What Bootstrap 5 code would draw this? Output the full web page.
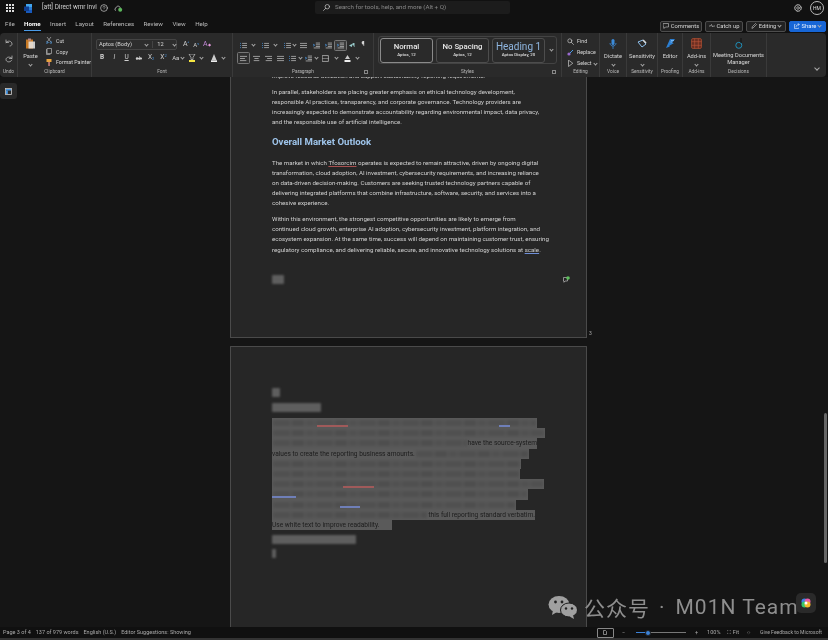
<!doctype html>
<html lang="en"><head><meta charset="utf-8"><title>Word</title>
<link href="https://cdn.jsdelivr.net/npm/bootstrap@5.3.0/dist/css/bootstrap.min.css" rel="stylesheet">
<script src="https://cdn.jsdelivr.net/npm/bootstrap@5.3.0/dist/js/bootstrap.bundle.min.js"></script>
<style>
html,body{height:100%;overflow:hidden;background:#111}
.shell{width:828px;height:640px;background:#111;color:#d6d6d6;font-family:Roboto,"Liberation Sans",sans-serif;font-size:6px;line-height:1.2;filter:blur(.5px);overflow:hidden;position:relative}
svg{display:block}
.i{fill:none;stroke:#c9c9c9;stroke-width:1;stroke-linecap:round;stroke-linejoin:round}
.titlebar{height:16px;padding-left:2px}
.doctitle{font-size:6.4px;color:#d0d0d0;margin-left:10px;width:54px;white-space:nowrap}
.searchbox{position:absolute;left:315px;top:1px;width:195px;height:13px;background:#1c1c1c;border-radius:2px;color:#8a8a8a;padding-left:8px;font-size:6.2px;gap:5px}
.avatar{width:14px;height:14px;border:1px solid #bbb;border-radius:50%;font-size:5px;color:#ddd}
.tabrow{height:17px;padding:3px 2px 0 0}
.tabname{font-size:6.2px;color:#bdbdbd;padding-bottom:2px;border-bottom:1px solid transparent;white-space:nowrap}
.tabsel{color:#fff;font-weight:700;border-bottom-color:#4a9be8}
.cmd{height:11px;border:1px solid #4d4d4d;border-radius:2px;background:#222;color:#d6d6d6;font-size:5.8px;padding:0;gap:2px;justify-content:center;white-space:nowrap}
.cmd-share{background:#1766d6;border-color:#1766d6;color:#eaf2ff}
.ribbon{height:44px;width:826px;background:#2a2a2a;border-radius:4px;position:relative;z-index:2}
.grp{height:44px;border-right:1px solid #3a3a3a;flex:none;position:relative;padding-bottom:9px}
.grp-label{position:absolute;left:0;right:0;bottom:2px;text-align:center;font-size:4.8px;color:#bbb;white-space:nowrap}
.launch{position:absolute;right:5px;bottom:3px;width:4px;height:4px;border:.6px solid #888}
.rw{height:11px;white-space:nowrap}
.cell-s{width:8px;flex:none;text-align:center;margin-left:4.3px}
.chev{width:3px;height:3px;border-right:.8px solid #aaa;border-bottom:.8px solid #aaa;transform:rotate(45deg);margin:-1px auto 0;flex:none}
.boxed{border:1px solid #777;border-radius:1.5px;background:#3b3b3b}
.fontbox{border:1px solid #444;border-radius:2px;height:11px;width:81px;background:#2d2d2d}
.lbl{font-size:5.7px;color:#d8d8d8;white-space:nowrap}
.lbl-sm{font-size:5.3px}
.pi{width:7px;height:7px;flex:none}
.stylewrap{border:1px solid #434343;border-radius:3px;height:28px;width:179px;padding:1px;gap:3px;margin:3px 0 0 4px}
.stylecard{width:53px;height:25px;border:1px solid #4d4d4d;border-radius:3px;text-align:center;flex:none}
.stylecard.on{border-color:#8a8a8a}
.sname{font-size:7.8px;line-height:11px;font-weight:500;color:#e8e8e8;padding-top:2px;height:13px}
.sh1{font-size:10px;font-weight:400;color:#8fb6e0}
.ssub{font-size:4.4px;line-height:6px;font-weight:500;color:#ddd}
.canvas{height:550px;overflow:hidden;background:#151515;position:relative}
.leftcol{width:230px;flex:none;padding-top:6px}
.panebtn{width:17px;height:16px;background:#292929;border-radius:3px}
.pagecol{width:357px;flex:none}
.docpage{background:#262626;border:1px solid #4a4a4a;padding-left:41px;color:#d0d0d0;font-size:6.15px;line-height:10.2px;white-space:nowrap}
.pg1{height:267px;margin-top:-6px;border-top:0}
.pg2{height:290px;margin-top:8px;padding-top:41px;border-radius:1px 1px 0 0;border-bottom:0}
.docpage p{margin:0 0 5.4px}
.dochead{font-size:9.6px;line-height:14px;font-weight:700;color:#9ec4ea;margin:7.5px 0 8.6px}
.sq{text-decoration:underline solid #a85050 .6px;text-underline-offset:1px}
.sqb{text-decoration:underline #6f8fd8 .8px;text-underline-offset:1px}
.fuzz{background:#5e5e5e;filter:blur(1.3px);border-radius:1px}
.hlrow{height:10.2px;background:#5a5a5a;position:relative;color:#1c1c1c;font-size:6.6px;font-weight:400;line-height:10.2px;overflow:hidden}
.fuzzfill{background:repeating-linear-gradient(90deg,#505050 0 17px,#565656 17px 19px,#4e4e4e 19px 31px,#575757 31px 33px,#515151 33px 41px,#565656 41px 43px);filter:blur(1.4px);height:6px;flex:1 1 auto;margin:0 1px}
.uline{position:absolute;bottom:1.5px;height:2px;filter:blur(.6px)}
.pgnum{font-size:5px;color:#aaa;padding:0 0 2px 2px}
.scrolltrack{position:absolute;right:1px;top:336px;width:3px;height:150px;background:#666;border-radius:2px}
.statusbar{height:11px;background:#101010;padding:0 6px 0 3px;font-size:5.5px;color:#aaa;gap:5px;white-space:nowrap}
.botstrip{height:2px;background:#333}
.track{width:50px;height:1px;background:#777;position:relative}
.trackfill{width:12px;height:1px;background:#3b82d8}
.knob{position:absolute;left:9px;top:-2.500px;width:6px;height:6px;border-radius:50%;background:#3b82d8;border:1px solid #222}
.wmark{position:absolute;left:548px;top:594px;color:#8e8e8e;font-size:21px;line-height:26px;font-family:Roboto,"Noto Sans CJK SC",sans-serif;white-space:nowrap;z-index:5;letter-spacing:1px}
.wcjk{margin-left:6px;font-size:21px;letter-spacing:1px;font-family:"Noto Sans CJK SC",sans-serif}
.wdot{margin:0 10px 0 9px}
.copi{position:absolute;left:796px;top:593px;width:20px;height:20px;background:#2a2a2a;border-radius:5px;z-index:6}
</style></head><body>
<div class="shell d-flex flex-column">
<svg width="0" height="0" class="position-absolute"><defs>
<symbol id="list" viewBox="0 0 10 10"><path d="M3 2h7M3 5h7M3 8h7" stroke="#c9c9c9" fill="none"/><path d="M0 2h1.500M0 5h1.500M0 8h1.500" stroke="#4a9be8" fill="none"/></symbol>
<symbol id="indent" viewBox="0 0 10 10"><path d="M4 1.500h6M4 4h6M4 6.500h6M1 8.500h9" stroke="#c9c9c9" fill="none"/><path d="M0 3l2.500 1.500L0 6" stroke="#4a9be8" fill="none"/></symbol>
<symbol id="left" viewBox="0 0 10 10"><path d="M0 2h10M0 5h7M0 8h9" stroke="#c9c9c9" fill="none"/></symbol>
<symbol id="center" viewBox="0 0 10 10"><path d="M0 2h10M2 5h6M1 8h8" stroke="#c9c9c9" fill="none"/></symbol>
<symbol id="right" viewBox="0 0 10 10"><path d="M0 2h10M3 5h7M1 8h9" stroke="#c9c9c9" fill="none"/></symbol>
<symbol id="just" viewBox="0 0 10 10"><path d="M0 2h10M0 5h10M0 8h10" stroke="#c9c9c9" fill="none"/></symbol>
</defs></svg>

<div class="titlebar d-flex align-items-center flex-none">
  <svg width="8" height="8" viewBox="0 0 8 8" class="ms-1"><g fill="#ddd"><rect width="2" height="2"/><rect x="3" width="2" height="2"/><rect x="6" width="2" height="2"/><rect y="3" width="2" height="2"/><rect x="3" y="3" width="2" height="2"/><rect x="6" y="3" width="2" height="2"/><rect y="6" width="2" height="2"/><rect x="3" y="6" width="2" height="2"/><rect x="6" y="6" width="2" height="2"/></g></svg>
  <svg width="8" height="9" viewBox="0 0 8 9" style="margin-left:10px"><path d="M2 0h6v9H2z" fill="#2b7cd3"/><path d="M2 0h6v3H2z" fill="#41a5ee"/><path d="M2 6h6v3H2z" fill="#185abd"/><rect x="0" y="2.500" width="5" height="4.500" fill="#103f91"/></svg>
  <span class="doctitle">[att] Direct wmr invi</span>
  <svg width="8" height="8" viewBox="0 0 8 8" class="i ms-1"><circle cx="4" cy="4" r="3.400" stroke-width=".7"/><path d="M3 3.200c0-1.400 2-1.400 2 0 0 .8-1 .8-1 1.600" stroke-width=".6"/></svg>
  <svg width="9" height="8" viewBox="0 0 9 8" style="margin-left:6px"><path d="M2 6.500C.5 6.500.5 4 2 4c.3-2.500 4-2.500 4.200 0" fill="none" stroke="#bbb" stroke-width=".8"/><circle cx="6.200" cy="5.800" r="2" fill="#5cb85c"/></svg>
  <div class="searchbox d-flex align-items-center"><svg width="7" height="7" viewBox="0 0 7 7" class="i"><circle cx="4.300" cy="2.700" r="2.200" stroke-width=".7"/><path d="M2.700 4.300L.5 6.500" stroke-width=".7"/></svg><span>Search for tools, help, and more (Alt + Q)</span></div>
  <div class="ms-auto d-flex align-items-center gap-2 me-1">
    <svg width="8" height="8" viewBox="0 0 8 8" class="i"><circle cx="4" cy="4" r="1.300" stroke-width=".7"/><circle cx="4" cy="4" r="3.200" stroke-width="1" stroke-dasharray="1.200 .6"/></svg>
    <div class="avatar d-flex align-items-center justify-content-center">HM</div>
  </div>
</div>

<div class="tabrow d-flex align-items-center flex-none">
  <div class="d-flex align-items-center" style="gap:9.400px;padding-left:5px">
    <span class="tabname">File</span><span class="tabname tabsel">Home</span><span class="tabname">Insert</span><span class="tabname">Layout</span><span class="tabname">References</span><span class="tabname">Review</span><span class="tabname">View</span><span class="tabname">Help</span>
  </div>
  <div class="ms-auto d-flex align-items-center" style="gap:3px">
    <div class="cmd d-flex align-items-center" style="width:42px"><svg width="6" height="6" viewBox="0 0 6 6" class="i"><path d="M.5.500h5v3.500h-3L1 5.500V4H.5z" stroke-width=".6"/></svg>Comments</div>
    <div class="cmd d-flex align-items-center" style="width:38px"><svg width="6" height="6" viewBox="0 0 6 6" class="i"><path d="M0 3h1.500L2.500 1.500 3.500 4 4.500 3H6" stroke-width=".6"/></svg>Catch up</div>
    <div class="cmd d-flex align-items-center" style="width:40px"><svg width="6" height="6" viewBox="0 0 6 6" class="i"><path d="M1 5l.3-1.300L4.500.5l1 1L2.300 4.700z" stroke-width=".6"/></svg>Editing <span class="chev" style="margin:-1px 0 0"></span></div>
    <div class="cmd cmd-share d-flex align-items-center" style="width:37px"><svg width="6" height="6" viewBox="0 0 6 6" class="i"><path d="M1 1.500H.5v4h4V5M2 4c0-2 1.500-2.500 2.500-2.500M4 .5l1.500 1L4 2.500" stroke-width=".6" stroke="#eaf2ff"/></svg>Share <span class="chev" style="margin:-1px 0 0"></span></div>
  </div>
</div>

<div class="ribbon d-flex flex-none">
  <!-- Undo -->
  <div class="grp d-flex flex-column align-items-center" style="width:18px;padding-top:6px;gap:8px">
    <svg width="8" height="8" viewBox="0 0 8 8" class="i"><path d="M1 1v2.500h2.500M1 3.500C3 1 7 2 7 5c0 1-1 2-2 2" stroke-width=".7"/></svg>
    <svg width="8" height="8" viewBox="0 0 8 8" class="i"><path d="M7 1v2.500H4.500M7 3.500C5 1 1 2 1 4.500S5 8 6.500 5.500" stroke-width=".7"/></svg>
    <span class="grp-label">Undo</span>
  </div>
  <!-- Clipboard -->
  <div class="grp d-flex" style="width:74px">
    <div class="d-flex flex-column align-items-center" style="width:25px;padding-top:5px">
      <svg width="11" height="11" viewBox="0 0 11 11"><path d="M1 1.500h7v9H1z" fill="#c87a25"/><path d="M3.500 3.500H10v7H3.500z" fill="#e8e8e8" opacity=".85"/><path d="M3 .5h3v2H3z" fill="#b88"/></svg>
      <span class="lbl" style="margin-top:4px">Paste</span>
      <span class="chev" style="margin-top:3px"></span>
    </div>
    <div class="d-flex flex-column" style="padding:2.500px 0 0 3px">
      <div class="rw d-flex align-items-center gap-1"><svg width="6" height="7" viewBox="0 0 6 7" class="i"><path d="M1 0l3.500 4.500M5 0L1.500 4.500" stroke-width=".6"/><circle cx="1" cy="5.500" r="1" stroke-width=".6" stroke="#5aa0e0"/><circle cx="5" cy="5.500" r="1" stroke-width=".6" stroke="#5aa0e0"/></svg><span class="lbl lbl-sm">Cut</span></div>
      <div class="rw d-flex align-items-center gap-1"><svg width="6" height="7" viewBox="0 0 6 7" class="i"><rect x="1.500" y=".5" width="4" height="5" stroke-width=".6"/><path d="M.5 1.500V6.500h3.500" stroke-width=".6"/></svg><span class="lbl lbl-sm">Copy</span></div>
      <div class="rw d-flex align-items-center gap-1"><svg width="6" height="7" viewBox="0 0 6 7"><rect x=".5" y="0" width="5" height="3" fill="#e8a33d"/><rect x="2.200" y="3" width="1.700" height="4" fill="#b77"/></svg><span class="lbl lbl-sm">Format Painter</span></div>
    </div>
    <span class="grp-label">Clipboard</span>
  </div>
  <!-- Font -->
  <div class="grp d-flex flex-column" style="width:141px;padding:6px 0 0 4px">
    <div class="d-flex align-items-center">
      <div class="fontbox d-flex align-items-center flex-none">
        <span class="lbl" style="width:52px;padding-left:2px">Aptos (Body)</span><span class="chev"></span>
        <span class="lbl ps-1" style="border-left:1px solid #444;margin-left:4px;width:22px">12</span><span class="chev"></span>
      </div>
      <div class="d-flex align-items-center" style="margin-left:6px;gap:4px;color:#ccc">
        <span style="font-size:7px">A<sup style="color:#4a9be8;font-size:4px">^</sup></span>
        <span style="font-size:6px">A<sup style="color:#4a9be8;font-size:4px">v</sup></span>
        <span style="font-size:7px;color:#c48ad8">A<span style="color:#e89ae0;font-size:4px">◆</span></span>
      </div>
    </div>
    <div class="d-flex align-items-center" style="margin-top:2.500px;height:11px;color:#d0d0d0;font-size:6.500px">
      <b class="cell-s" style="margin-left:2px">B</b><i class="cell-s">I</i><u class="cell-s">U</u><s class="cell-s" style="font-size:5.500px">ab</s>
      <span class="cell-s">X<sub style="font-size:4px;color:#4a9be8">2</sub></span>
      <span class="cell-s">X<sup style="font-size:4px;color:#4a9be8">2</sup></span>
      <span class="cell-s" style="font-size:6px">Aa</span><span class="chev" style="margin:-1px 0 0 1.500px"></span>
      <svg width="8" height="8" viewBox="0 0 8 8" class="flex-none" style="margin-left:3.500px"><path d="M1 0h6L5 3.500v2H3v-2z" fill="none" stroke="#ccc" stroke-width=".7"/><rect x="1" y="6" width="6" height="2" fill="#f5e642"/></svg><span class="chev" style="margin:-1px 0 0 4.500px"></span>
      <svg width="8" height="8" viewBox="0 0 8 8" class="flex-none" style="margin-left:6.500px"><path d="M4 0L1.500 6h5z" fill="#ccc"/><rect x="1" y="6.300" width="6" height="1.700" fill="#eee"/></svg><span class="chev" style="margin:-1px 0 0 4.500px"></span>
    </div>
    <span class="grp-label">Font</span>
  </div>
  <!-- Paragraph -->
  <div class="grp d-flex flex-column" style="width:141px;padding:6px 0 0 4px">
    <div class="d-flex align-items-center" style="height:12px">
      <svg class="pi" style="margin-left:2.500px"><use href="#list"/></svg><span class="chev" style="margin:-1px 0 0 5px"></span>
      <svg class="pi" style="margin-left:7px"><use href="#list"/></svg><span class="chev" style="margin:-1px 0 0 5px"></span>
      <svg class="pi" style="margin-left:7px"><use href="#list"/></svg><span class="chev" style="margin:-1px 0 0 2px"></span>
      <svg class="pi" style="margin-left:4px"><use href="#just"/></svg>
      <svg class="pi" style="margin-left:6px"><use href="#indent"/></svg>
      <svg class="pi" style="margin-left:5px"><use href="#indent"/></svg>
      <span class="boxed d-flex align-items-center justify-content-center flex-none" style="width:13px;height:11px;margin-left:2.500px"><svg width="7" height="7"><use href="#indent"/></svg></span>
      <span class="flex-none" style="font-size:6px;width:9px;margin-left:2px;color:#9cc">◂¶</span>
      <span class="flex-none" style="font-size:6.500px;margin-left:3.500px">¶</span>
    </div>
    <div class="d-flex align-items-center" style="height:12px;margin-top:1px">
      <span class="boxed d-flex align-items-center justify-content-center flex-none" style="width:13px;height:12px;background:#303030"><svg width="7" height="7"><use href="#left"/></svg></span>
      <svg class="pi" style="margin-left:2.500px"><use href="#center"/></svg>
      <svg class="pi" style="margin-left:5px"><use href="#right"/></svg>
      <svg class="pi" style="margin-left:5px"><use href="#just"/></svg>
      <svg class="pi" style="margin-left:5px"><use href="#list"/></svg><span class="chev" style="margin:-1px 0 0 3px"></span>
      <svg class="pi" style="margin-left:3px"><use href="#indent"/></svg><span class="chev" style="margin:-1px 0 0 3px"></span>
      <svg class="pi i" viewBox="0 0 6 6" style="margin-left:4px"><rect x=".5" y=".5" width="5" height="5" stroke-width=".6"/><path d="M.5 3h5" stroke-width=".4"/></svg><span class="chev" style="margin:-1px 0 0 6px"></span>
      <svg class="pi" viewBox="0 0 7 7" style="margin-left:6px"><path d="M3.500 0L1 4h5z" fill="#c9c9c9"/><rect x=".5" y="5" width="6" height="2" fill="#eee"/></svg><span class="chev" style="margin:-1px 0 0 5px"></span>
    </div>
    <span class="grp-label">Paragraph</span><span class="launch"></span>
  </div>
  <!-- Styles -->
  <div class="grp" style="width:188px">
    <div class="stylewrap d-flex">
      <div class="stylecard on"><div class="sname">Normal</div><div class="ssub">Aptos, 12</div></div>
      <div class="stylecard"><div class="sname">No Spacing</div><div class="ssub">Aptos, 12</div></div>
      <div class="stylecard"><div class="sname sh1">Heading 1</div><div class="ssub">Aptos Display, 20</div></div>
      <div class="d-flex align-items-center justify-content-center flex-grow-1"><span class="chev"></span></div>
    </div>
    <span class="grp-label">Styles</span><span class="launch"></span>
  </div>
  <!-- Editing -->
  <div class="grp d-flex flex-column" style="width:38px;padding:3px 0 0 4.500px">
    <div class="rw d-flex align-items-center" style="gap:3.500px"><svg width="7" height="7" viewBox="0 0 7 7" class="i"><circle cx="2.800" cy="2.800" r="2" stroke-width=".7"/><path d="M4.300 4.300L6.500 6.500" stroke-width=".7"/></svg><span class="lbl lbl-sm">Find</span></div>
    <div class="rw d-flex align-items-center" style="gap:3.500px"><svg width="7" height="7" viewBox="0 0 7 7"><circle cx="2" cy="5" r="1.600" fill="#9a6bd0"/><path d="M6 1L3 4" stroke="#4a9be8" stroke-width="1"/></svg><span class="lbl lbl-sm">Replace</span></div>
    <div class="rw d-flex align-items-center" style="gap:3.500px"><svg width="7" height="7" viewBox="0 0 7 7" class="i"><path d="M1.500.5v6l4-3z" stroke-width=".7"/></svg><span class="lbl lbl-sm">Select</span><span class="chev" style="margin:-1px 0 0 -1px"></span></div>
    <span class="grp-label">Editing</span>
  </div>
  <!-- Voice -->
  <div class="grp d-flex flex-column align-items-center" style="width:27px;padding-top:6px">
    <svg width="8" height="10" viewBox="0 0 8 10"><rect x="2.500" y="0" width="3" height="6" rx="1.500" fill="#3b8ad8"/><path d="M1 4c0 4 6 4 6 0M4 7v3" stroke="#3b8ad8" stroke-width=".8" fill="none"/></svg>
    <span class="lbl" style="margin-top:4px">Dictate</span><span class="chev" style="margin-top:3px"></span>
    <span class="grp-label">Voice</span>
  </div>
  <!-- Sensitivity -->
  <div class="grp d-flex flex-column align-items-center" style="width:31px;padding-top:6px">
    <svg width="10" height="10" viewBox="0 0 10 10"><path d="M1 3l4 5 4-3-3-4z" fill="none" stroke="#8fc1ee" stroke-width="1"/><path d="M6 1l3 3" stroke="#d8d8d8" stroke-width="1.600"/></svg>
    <span class="lbl" style="margin-top:4px">Sensitivity</span><span class="chev" style="margin-top:3px"></span>
    <span class="grp-label">Sensitivity</span>
  </div>
  <!-- Proofing -->
  <div class="grp d-flex flex-column align-items-center" style="width:25px;padding-top:5px">
    <svg width="11" height="11" viewBox="0 0 11 11"><path d="M1 10L5 1h5L7 5h2L4 8l1 .5z" fill="#2b7fd3"/><path d="M6 2.500h3M5.500 4h2" stroke="#9ad0ff" stroke-width=".7"/></svg>
    <span class="lbl" style="margin-top:4px">Editor</span>
    <span class="grp-label">Proofing</span>
  </div>
  <!-- Add-ins -->
  <div class="grp d-flex flex-column align-items-center" style="width:28px;padding-top:5px">
    <svg width="11" height="11" viewBox="0 0 11 11"><rect x=".5" y=".5" width="10" height="10" rx="1.500" fill="#6b2f22" stroke="#a04a30" stroke-width=".8"/><path d="M3.700.5v10M7.300.5v10M.5 3.700h10M.5 7.300h10" stroke="#c0583a" stroke-width=".6"/></svg>
    <span class="lbl" style="margin-top:4px">Add-ins</span><span class="chev" style="margin-top:3px"></span>
    <span class="grp-label">Add-ins</span>
  </div>
  <!-- Decisions -->
  <div class="grp d-flex flex-column align-items-center" style="width:56px;padding-top:5px">
    <svg width="8" height="11" viewBox="0 0 8 11"><circle cx="3.800" cy="7.300" r="3" fill="none" stroke="#1f8fb8" stroke-width="1"/><path d="M6 0v5" stroke="#111" stroke-width="1"/></svg>
    <span class="lbl" style="margin-top:3px;line-height:7px;text-align:center">Meeting Documents<br>Manager</span>
    <span class="grp-label">Decisions</span>
  </div>
  <div class="flex-grow-1 d-flex align-items-end justify-content-end" style="padding:0 7px 7px 0"><span class="chev" style="width:4px;height:4px;margin:0"></span></div>
</div>

<div class="canvas d-flex flex-grow-1">
  <div class="leftcol"><div class="panebtn d-flex align-items-center justify-content-center"><svg width="7" height="7" viewBox="0 0 7 7"><rect x=".5" y=".5" width="6" height="6" fill="none" stroke="#ccc" stroke-width=".8"/><rect x="1" y="1" width="5" height="1.500" fill="#4a9be8"/><rect x="1" y="2.500" width="1.800" height="3.500" fill="#4a9be8"/></svg></div></div>
  <div class="pagecol">
    <div class="d-flex align-items-end" style="width:380px">
      <div class="docpage pg1 flex-none" style="width:357px">
        <p>improve resource utilization and support sustainability reporting requirements.</p>
        <p>In parallel, stakeholders are placing greater emphasis on ethical technology development,<br>responsible AI practices, transparency, and corporate governance. Technology providers are<br>increasingly expected to demonstrate accountability regarding environmental impact, data privacy,<br>and the responsible use of artificial intelligence.</p>
        <div class="dochead">Overall Market Outlook</div>
        <p>The market in which <span class="sq">Tfosorcim</span> operates is expected to remain attractive, driven by ongoing digital<br>transformation, cloud adoption, AI investment, cybersecurity requirements, and increasing reliance<br>on data-driven decision-making. Customers are seeking trusted technology partners capable of<br>delivering integrated platforms that combine infrastructure, software, security, and services into a<br>cohesive experience.</p>
        <p>Within this environment, the strongest competitive opportunities are likely to emerge from<br>continued cloud growth, enterprise AI adoption, cybersecurity investment, platform integration, and<br>ecosystem expansion. At the same time, success will depend on maintaining customer trust, ensuring<br>regulatory compliance, and delivering reliable, secure, and innovative technology solutions at <span class="sqb">scale</span>.</p>
        <div class="d-flex align-items-center justify-content-between" style="width:298px;margin-top:20px">
          <div class="fuzz" style="width:12px;height:9px"></div>
          <svg width="7" height="7" viewBox="0 0 7 7"><path d="M.5 1.500h4v3.500H2L1 6.300V5H.5z" fill="none" stroke="#bbb" stroke-width=".7"/><circle cx="5" cy="2" r="1.800" fill="#5cc05c"/></svg>
        </div>
      </div>
      <span class="pgnum">3</span>
    </div>
    <div class="docpage pg2">
      <div class="fuzz" style="width:8px;height:9px"></div>
      <div class="fuzz" style="width:49px;height:9px;margin:6px 0 6px"></div>
      <div class="hlrow d-flex align-items-center" style="width:265px"><div class="fuzzfill"></div><span class="uline" style="left:45px;width:31px;background:#a05a5a"></span><span class="uline" style="left:227px;width:11px;background:#6f7fb8"></span></div>
      <div class="hlrow d-flex align-items-center" style="width:273px"><div class="fuzzfill"></div></div>
      <div class="hlrow d-flex align-items-center" style="width:265px"><div class="fuzzfill"></div><span>have the source-system</span></div>
      <div class="hlrow d-flex align-items-center" style="width:257px"><span>values to create the reporting business amounts.</span><div class="fuzzfill"></div></div>
      <div class="hlrow d-flex align-items-center" style="width:249px"><div class="fuzzfill"></div></div>
      <div class="hlrow d-flex align-items-center" style="width:248px"><div class="fuzzfill"></div></div>
      <div class="hlrow d-flex align-items-center" style="width:272px"><div class="fuzzfill"></div><span class="uline" style="left:71px;width:31px;background:#a05a5a"></span></div>
      <div class="hlrow d-flex align-items-center" style="width:256px"><div class="fuzzfill"></div><span class="uline" style="left:0;width:24px;background:#6f7fb8"></span></div>
      <div class="hlrow d-flex align-items-center" style="width:244px"><div class="fuzzfill"></div><span class="uline" style="left:68px;width:20px;background:#6f7fb8"></span></div>
      <div class="hlrow d-flex align-items-center" style="width:263px"><div class="fuzzfill"></div><span>this full reporting standard verbatim.</span></div>
      <div class="hlrow d-flex align-items-center" style="width:120px"><span>Use white text to improve readability.</span></div>
      <div class="fuzz" style="width:84px;height:9px;margin:5px 0 5px"></div>
      <div class="fuzz" style="width:4px;height:9px"></div>
    </div>
  </div>
  <div class="scrolltrack"></div>
</div>

<div class="statusbar d-flex align-items-center flex-none">
  <span>Page 3 of 4</span><span>137 of 979 words</span><span>English (U.S.)</span><span>Editor Suggestions: Showing</span>
  <div class="ms-auto d-flex align-items-center" style="gap:7px">
    <span class="d-flex align-items-center justify-content-center" style="width:17px;height:10px;border:1px solid #888;border-radius:1px"><svg width="4" height="5" viewBox="0 0 4 5"><path d="M.5.500h2l1 1v3h-3z" fill="none" stroke="#ccc" stroke-width=".6"/></svg></span>
    <span style="margin-left:1px">−</span>
    <span class="track ms-1"><span class="trackfill d-block"></span><span class="knob"></span></span>
    <span style="margin-left:2px">+</span>
    <span style="margin-left:2px">100%</span><span>⛶ Fit</span><span>☼</span><span style="margin-left:2px;font-size:5.1px">Give Feedback to Microsoft</span>
  </div>
</div>
<div class="botstrip flex-none"></div>

<div class="wmark d-flex align-items-center">
  <svg width="30" height="24" viewBox="0 0 30 24"><ellipse cx="11" cy="9.500" rx="10.500" ry="8.500" fill="#a0a0a0"/><path d="M5 15l-1 5 5-3z" fill="#a0a0a0"/><ellipse cx="21" cy="15" rx="8.500" ry="7" fill="#a0a0a0" stroke="#1c1c1c" stroke-width="1"/><path d="M25 20l1 4-4.500-2.500z" fill="#a0a0a0"/><circle cx="7.500" cy="7" r="1.400" fill="#222"/><circle cx="14" cy="7" r="1.400" fill="#222"/><circle cx="18" cy="13.500" r="1.200" fill="#222"/><circle cx="24" cy="13.500" r="1.200" fill="#222"/></svg>
  <span class="wcjk">公众号</span><span class="wdot">·</span><span>M01N Team</span>
</div>
<div class="copi d-flex align-items-center justify-content-center"><svg width="10" height="10" viewBox="0 0 10 10"><circle cx="3.500" cy="3.500" r="3" fill="#3b82e8"/><circle cx="6.500" cy="3.500" r="3" fill="#e85aa8"/><circle cx="3.500" cy="6.500" r="3" fill="#34c76a"/><circle cx="6.500" cy="6.500" r="3" fill="#f5b82e"/><circle cx="5" cy="5" r="1.500" fill="#fff"/></svg></div>
</div>
</body></html>
